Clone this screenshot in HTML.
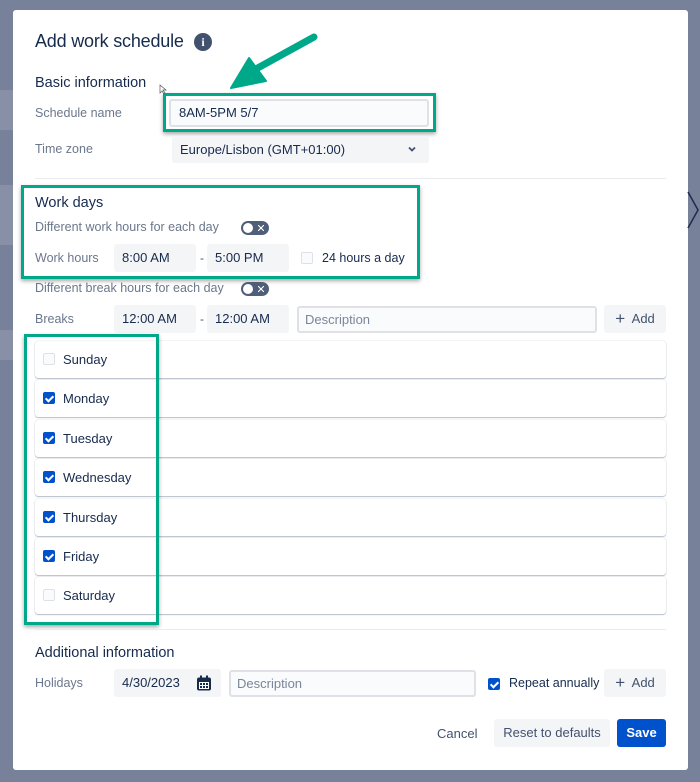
<!DOCTYPE html>
<html><head><meta charset="utf-8"><style>
*{box-sizing:border-box;margin:0;padding:0}
body{width:700px;height:782px;background:#77819a;font-family:"Liberation Sans",sans-serif;position:relative;overflow:hidden;color:#172b4d}
.a{position:absolute}
.modal{left:13px;top:10px;width:675px;height:760px;background:#fff;border-radius:3px}
.lbl{font-size:12.5px;color:#6b778c}
.h{font-size:14.5px;color:#172b4d}
.inp{background:#f4f5f7;border-radius:3px;font-size:13px;color:#172b4d;padding-left:8px;line-height:28px;height:28px}
.desc{background:#fafbfc;border:2px solid #dfe1e6;border-radius:3px;font-size:13px;color:#7a869a;padding-left:6px;line-height:24px}
.tog{width:28px;height:14px;border-radius:7px;background:#505f79}
.tog:before{content:"";position:absolute;left:2px;top:2px;width:10px;height:10px;border-radius:50%;background:#fff}
.tog:after{content:"";position:absolute;left:0;top:0;width:28px;height:14px;background:linear-gradient(45deg,transparent 45%,#fff 45%,#fff 55%,transparent 55%) 17px 4px/6px 6px no-repeat,linear-gradient(-45deg,transparent 45%,#fff 45%,#fff 55%,transparent 55%) 17px 4px/6px 6px no-repeat}
.cb{width:12px;height:12px;border-radius:2px;border:1.5px solid #dfe1e6;background:#fafbfc}
.cbc{width:12px;height:12px;border-radius:2px;background:#0052cc}
.cbc:after{content:"";position:absolute;left:3.5px;top:1.5px;width:3px;height:6px;border:solid #fff;border-width:0 2px 2px 0;transform:rotate(45deg)}
.day{left:35px;width:631px;height:37px;border-radius:3px;box-shadow:0 1px 1px rgba(9,30,66,.25),0 0 1px rgba(9,30,66,.3);background:#fff}
.day span{position:absolute;left:28px;top:11px;font-size:13px;color:#172b4d}
.day .cb,.day .cbc{left:8px;top:12px}
.g{border:3px solid #00a88a;box-shadow:0 2px 4px rgba(0,0,0,.35)}
.btn{background:#f4f5f7;border-radius:3px;font-size:13px;color:#42526e;text-align:center;line-height:28px}
</style></head><body>
<div class="a" style="left:0;top:90px;width:13px;height:40px;background:#8790a6"></div>
<div class="a" style="left:0;top:185px;width:13px;height:60px;background:#8790a6"></div>
<div class="a" style="left:0;top:330px;width:13px;height:30px;background:#8790a6"></div>
<div class="a modal"></div>
<svg class="a" style="left:686px;top:190px" width="14" height="40"><path d="M2 2 L12 20 L2 38" stroke="#1d2b4d" stroke-width="1.5" fill="none"/></svg>
<div class="a" style="left:35px;top:31px;font-size:18px;letter-spacing:-0.2px;color:#172b4d">Add work schedule</div>
<div class="a" style="left:194px;top:33px;width:18px;height:18px;border-radius:50%;background:#42526e;color:#fff;font-size:12px;font-weight:bold;text-align:center;line-height:18px;font-family:'Liberation Serif',serif">i</div>
<div class="a h" style="left:35px;top:75px">Basic information</div>
<div class="a lbl" style="left:35px;top:106px">Schedule name</div>
<div class="a g" style="left:163px;top:93px;width:273px;height:39px"></div>
<div class="a desc" style="left:169px;top:99px;width:260px;height:28px;color:#172b4d;padding-left:8px">8AM-5PM 5/7</div>
<div class="a lbl" style="left:35px;top:142px">Time zone</div>
<div class="a inp" style="left:172px;top:136px;width:257px;height:27px;line-height:27px">Europe/Lisbon (GMT+01:00)</div>
<svg class="a" style="left:408px;top:145px" width="8" height="8"><path d="M1 2.5 L4 5.5 L7 2.5" stroke="#42526e" stroke-width="1.8" fill="none"/></svg>
<div class="a" style="left:35px;top:178px;width:631px;height:1px;background:#ebecf0"></div>
<div class="a g" style="left:21px;top:185px;width:399px;height:94px"></div>
<div class="a h" style="left:35px;top:195px">Work days</div>
<div class="a lbl" style="left:35px;top:220px">Different work hours for each day</div>
<div class="a tog" style="left:241px;top:221px"></div>
<div class="a lbl" style="left:35px;top:251px">Work hours</div>
<div class="a inp" style="left:114px;top:244px;width:82px">8:00 AM</div>
<div class="a" style="left:200px;top:251px;font-size:12px;color:#42526e">-</div>
<div class="a inp" style="left:207px;top:244px;width:82px">5:00 PM</div>
<div class="a cb" style="left:301px;top:252px"></div>
<div class="a" style="left:322px;top:251px;font-size:12.5px">24 hours a day</div>
<div class="a lbl" style="left:35px;top:281px">Different break hours for each day</div>
<div class="a tog" style="left:241px;top:282px"></div>
<div class="a lbl" style="left:35px;top:312px">Breaks</div>
<div class="a inp" style="left:114px;top:305px;width:82px">12:00 AM</div>
<div class="a" style="left:200px;top:312px;font-size:12px;color:#42526e">-</div>
<div class="a inp" style="left:207px;top:305px;width:82px">12:00 AM</div>
<div class="a desc" style="left:297px;top:306px;width:300px;height:27px">Description</div>
<div class="a btn" style="left:604px;top:305px;width:62px"><b style="font-size:17px;font-weight:normal;vertical-align:-1px">+</b>&nbsp; Add</div>
<div class="a day" style="top:341px"><div class="a cb"></div><span>Sunday</span></div>
<div class="a day" style="top:380px"><div class="a cbc"></div><span>Monday</span></div>
<div class="a day" style="top:420px"><div class="a cbc"></div><span>Tuesday</span></div>
<div class="a day" style="top:459px"><div class="a cbc"></div><span>Wednesday</span></div>
<div class="a day" style="top:499px"><div class="a cbc"></div><span>Thursday</span></div>
<div class="a day" style="top:538px"><div class="a cbc"></div><span>Friday</span></div>
<div class="a day" style="top:577px"><div class="a cb"></div><span>Saturday</span></div>
<div class="a g" style="left:24px;top:334px;width:135px;height:291px"></div>
<div class="a" style="left:35px;top:629px;width:631px;height:1px;background:#ebecf0"></div>
<div class="a h" style="left:35px;top:645px">Additional information</div>
<div class="a lbl" style="left:35px;top:676px">Holidays</div>
<div class="a inp" style="left:114px;top:669px;width:107px">4/30/2023</div>
<svg class="a" style="left:196px;top:675px" width="16" height="17"><rect x="1" y="2.5" width="14" height="13" rx="2" fill="#172b4d"/><rect x="4" y="0.5" width="2" height="4" fill="#172b4d"/><rect x="10" y="0.5" width="2" height="4" fill="#172b4d"/><rect x="3" y="7" width="10" height="7" fill="#fff"/><g fill="#172b4d"><rect x="4" y="8" width="2" height="2"/><rect x="7" y="8" width="2" height="2"/><rect x="10" y="8" width="2" height="2"/><rect x="4" y="11" width="2" height="2"/><rect x="7" y="11" width="2" height="2"/><rect x="10" y="11" width="2" height="2"/></g></svg>
<div class="a desc" style="left:229px;top:670px;width:247px;height:27px">Description</div>
<div class="a cbc" style="left:488px;top:678px"></div>
<div class="a" style="left:509px;top:676px;font-size:12.5px">Repeat annually</div>
<div class="a btn" style="left:604px;top:669px;width:62px"><b style="font-size:17px;font-weight:normal;vertical-align:-1px">+</b>&nbsp; Add</div>
<div class="a" style="left:437px;top:726px;font-size:13px;color:#42526e">Cancel</div>
<div class="a btn" style="left:494px;top:719px;width:116px">Reset to defaults</div>
<div class="a" style="left:617px;top:719px;width:49px;height:28px;background:#0052cc;border-radius:3px;color:#fff;font-size:13px;font-weight:bold;text-align:center;line-height:28px">Save</div>
<svg class="a" style="left:0;top:0" width="700" height="120"><path d="M314 37 L254 70" stroke="#00a88a" stroke-width="7" stroke-linecap="round"/><path d="M231 88 L249 58 L266 81 Z" fill="#00a88a" stroke="#00a88a" stroke-width="2" stroke-linejoin="round"/><path d="M160 85 L160 93 L162 91 L164 94 L165 93 L163 90 L166 90 Z" fill="#fff" stroke="#555" stroke-width=".7"/></svg>
</body></html>
